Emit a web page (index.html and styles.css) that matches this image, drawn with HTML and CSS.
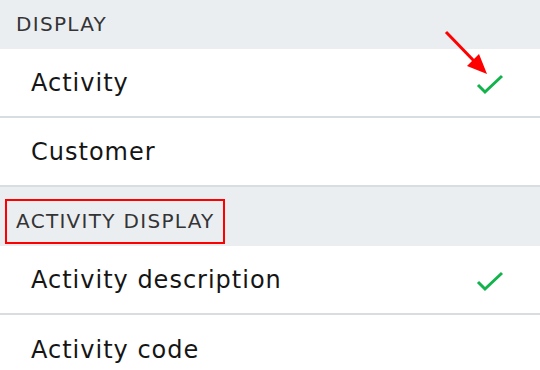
FILE: index.html
```html
<!DOCTYPE html>
<html lang="en">
<head>
    <meta charset="UTF-8">
    <meta name="viewport" content="width=device-width, initial-scale=1.0">
    <title>Display settings</title>
    <link rel="stylesheet" href="styles.css">
</head>
<body>
    <div class="settings">
        <div class="section-title">DISPLAY</div>
        <div class="option">
            <span>Activity</span>
            <svg class="check" width="28" height="22" viewBox="0 0 28 22"><path d="M2 12 L9 19 L26 3" fill="none" stroke="#12b34b" stroke-width="3"/></svg>
            <svg class="arrow" width="50" height="50" viewBox="0 0 50 50">
                <line x1="3" y1="2" x2="33" y2="33" stroke="#f00" stroke-width="3"/>
                <polygon points="44,44 24,36 36,24" fill="#f00"/>
            </svg>
        </div>
        <div class="option">
            <span>Customer</span>
        </div>
        <div class="section-title"><span class="marked">ACTIVITY DISPLAY</span></div>
        <div class="option">
            <span>Activity description</span>
            <svg class="check" width="28" height="22" viewBox="0 0 28 22"><path d="M2 12 L9 19 L26 3" fill="none" stroke="#12b34b" stroke-width="3"/></svg>
        </div>
        <div class="option">
            <span>Activity code</span>
        </div>
    </div>
</body>
</html>
```

FILE: styles.css
```css
body {
    margin: 0;
    font-family: "DejaVu Sans", sans-serif;
    background-color: #fff;
    overflow: hidden;
}

.settings {
    margin-top: -10px; /* list is scrolled a bit */
}

.section-title {
    height: 59px;
    background-color: #ebeef1;
    display: flex;
    align-items: center;
    padding: 9px 16px 0;
    font-size: 20px;
    letter-spacing: 1.3px;
    color: #343436;
    box-sizing: border-box;
}

.marked {
    outline: 2px solid #f00;
    padding: 8px 8px 9px 9px;
    margin-left: -9px;
}

.option {
    position: relative;
    height: 69px;
    display: flex;
    align-items: center;
    justify-content: space-between;
    padding: 0 36px 0 31px;
    font-size: 24px;
    letter-spacing: 1px;
    color: #151515;
    border-bottom: 2px solid #d8dde2;
    box-sizing: border-box;
}

.option:last-child {
    border-bottom: none;
}

.check {
    margin-top: 2px;
}

.arrow {
    position: absolute;
    left: 443px;
    top: -19px;
}
```
